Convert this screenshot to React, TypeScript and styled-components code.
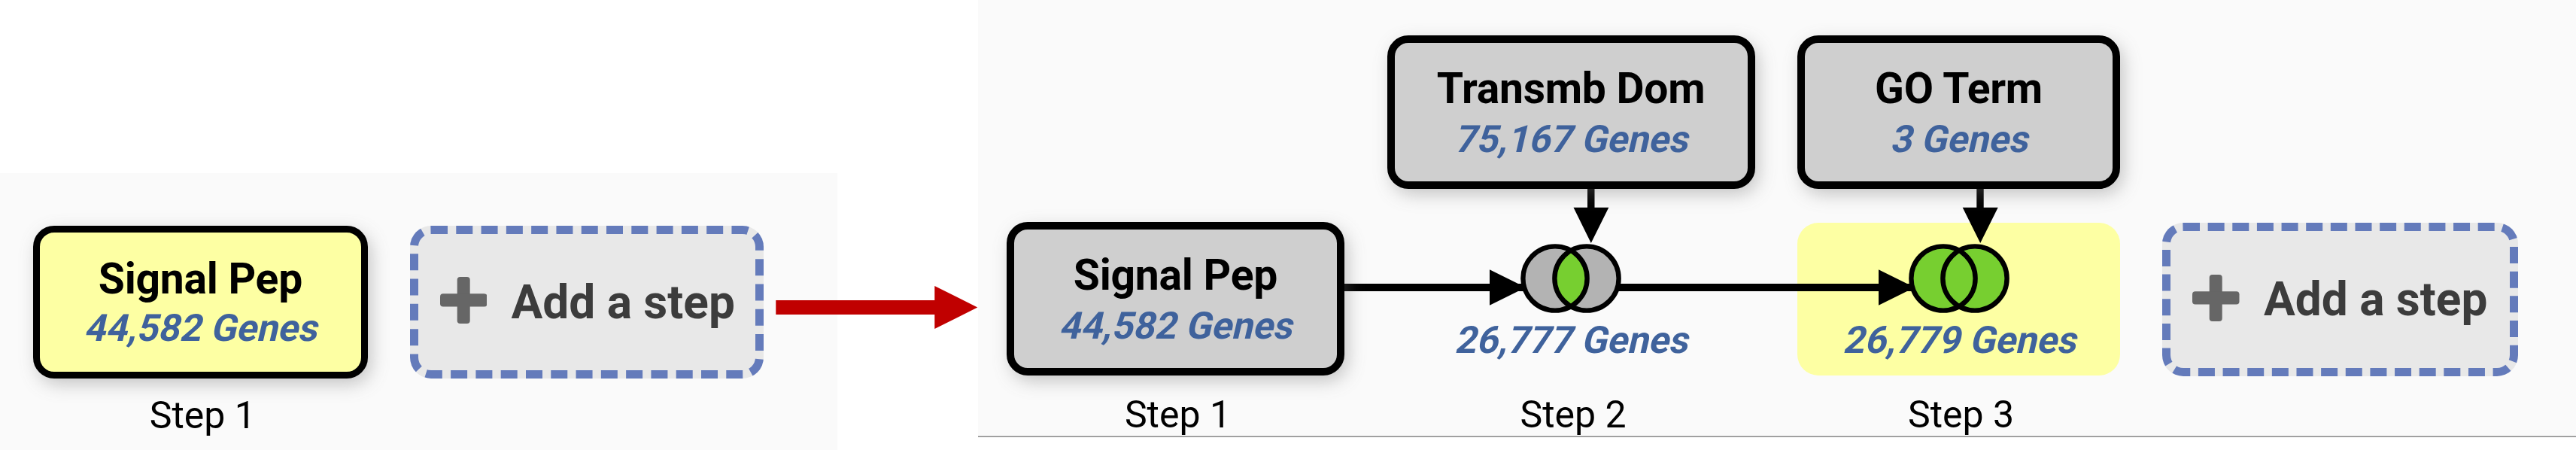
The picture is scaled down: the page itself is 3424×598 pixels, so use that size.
import React from 'react';
import styled, { createGlobalStyle } from 'styled-components';

const GlobalStyle = createGlobalStyle`
  body { margin: 0; background: #fff; font-family: Roboto, "Liberation Sans", sans-serif; color: #000; }
`;

const Page = styled.main`
  display: flex;
  align-items: flex-start;
  width: 3424px;
  height: 598px;
  overflow: hidden;
`;

const Before = styled.section`
  display: flex;
  flex: none;
  gap: 55.7px;
  box-sizing: border-box;
  width: 1113px;
  height: 368px;
  margin: 230px 187px 0 0;
  padding: 70px 0 0 43.6px;
  background: #fafafa;
`;

const After = styled.section`
  position: relative;
  display: flex;
  flex: none;
  gap: 56.5px;
  box-sizing: border-box;
  width: 2124px;
  height: 581px;
  padding: 47px 0 0 37.8px;
  overflow: hidden;
  background: linear-gradient(#bcbcbc, #bcbcbc) 0 579px / 100% 1px no-repeat,
    linear-gradient(#8a8a8a, #8a8a8a) 0 580px / 100% 1px no-repeat, #fafafa;
`;

const Column = styled.div<{ $width: number }>`
  display: flex;
  flex: none;
  flex-direction: column;
  width: ${(p) => p.$width}px;
`;

const Slot = styled.div`
  height: 204px;
  margin-bottom: 45px;
`;

const StepBox = styled.div<{ $active?: boolean; $tight?: boolean }>`
  position: relative;
  z-index: 2;
  display: flex;
  flex-direction: column;
  align-items: center;
  gap: ${(p) => (p.$tight ? 0.5 : 2.5)}px;
  box-sizing: border-box;
  height: ${(p) => (p.$tight ? 203 : 204)}px;
  padding-top: ${(p) => (p.$tight ? 30 : 29)}px;
  border: ${(p) => (p.$tight ? 9 : 10)}px solid #000;
  border-radius: 28px;
  background: ${(p) => (p.$active ? '#fdffa3' : '#cfcfcf')};
  box-shadow: 5px 8px 24px -2px rgba(110, 110, 110, 0.42);
`;

const Title = styled.div`
  font-size: 57px;
  font-weight: 700;
  line-height: 64px;
  letter-spacing: -0.25px;
  white-space: nowrap;
`;

const Count = styled.div`
  color: #3f629c;
  font-size: 50px;
  font-weight: 700;
  line-height: 64px;
  white-space: nowrap;
  transform: skewX(-13deg);
  transform-origin: 50% 49px;
`;

const Result = styled.div<{ $active?: boolean }>`
  display: flex;
  flex-direction: column;
  align-items: center;
  gap: 4.5px;
  box-sizing: border-box;
  height: 204px;
  padding-top: 27.5px;
  border-radius: 28px;
  background: ${(p) => (p.$active ? '#fdffa3' : 'transparent')};
`;

const VennIcon = styled.svg`
  position: relative;
  z-index: 2;
  flex: none;
  display: block;
`;

const Label = styled.div<{ $tight?: boolean }>`
  padding-left: 6px;
  margin-top: ${(p) => (p.$tight ? 19 : 22)}px;
  font-size: 50px;
  line-height: 60px;
  text-align: center;
`;

const AddButton = styled.button<{ $width: number; $height: number }>`
  display: flex;
  flex: none;
  align-items: center;
  gap: 32px;
  box-sizing: border-box;
  width: ${(p) => p.$width}px;
  height: ${(p) => p.$height}px;
  padding: 0 0 0 29px;
  border: 11px dashed #647bbb;
  border-radius: 28px;
  background: #e8e8e8;
  color: #3c3c3c;
  font: 700 62.2px/72px Roboto, "Liberation Sans", sans-serif;
  white-space: nowrap;
`;

const PlusIcon = styled.svg`
  flex: none;
  margin-bottom: 5px;
`;

const Transition = styled.svg`
  position: absolute;
  left: 1031px;
  top: 380px;
`;

const Connectors = styled.svg`
  position: absolute;
  left: 0;
  top: 0;
  z-index: 1;
`;

function Plus() {
  return (
    <PlusIcon width="62.5" height="62" viewBox="0 0 62.5 62" fill="#666">
      <rect x="22.7" y="0" width="17" height="62" rx="4" />
      <rect x="0" y="22.2" width="62.5" height="17.4" rx="4" />
    </PlusIcon>
  );
}

function Venn({ union }: { union?: boolean }) {
  const side = union ? '#77cf30' : '#b3b3b3';
  return (
    <VennIcon width="134" height="92" viewBox="0 0 134 92">
      <circle cx="46" cy="46" r="42.6" fill={side} />
      <circle cx="88" cy="46" r="42.6" fill={side} />
      <path d="M67 8.9A42.6 42.6 0 0 1 67 83.1A42.6 42.6 0 0 1 67 8.9Z" fill="#77cf30" />
      <g fill="none" stroke="#000" strokeWidth="6.4">
        <circle cx="46" cy="46" r="42.6" />
        <circle cx="88" cy="46" r="42.6" />
      </g>
    </VennIcon>
  );
}

interface StepProps {
  title: string;
  count: string;
  active?: boolean;
  tight?: boolean;
}

function Step({ title, count, active, tight }: StepProps) {
  return (
    <StepBox $active={active} $tight={tight}>
      <Title>{title}</Title>
      <Count>{count}</Count>
    </StepBox>
  );
}

export default function App() {
  return (
    <>
      <GlobalStyle />
      <Page>
        <Before>
          <Column $width={445.6}>
            <Step title="Signal Pep" count="44,582 Genes" active tight />
            <Label $tight>Step 1</Label>
          </Column>
          <AddButton $width={470} $height={203}>
            <Plus />
            Add a step
          </AddButton>
        </Before>
        <After>
          <Connectors width="2124" height="579">
            <path d="M487 377H725V387H487ZM680 358.3L728 382L680 405.7Z" />
            <path d="M850 377H1242V387H850ZM1197 358.3L1245 382L1197 405.7Z" />
            <path d="M810 250H819.5V277H810ZM791.5 275.7H838.3L814.8 323Z" />
            <path d="M1327.3 250H1336.7V277H1327.3ZM1308.7 275.7H1355.7L1332.2 323Z" />
          </Connectors>
          <Column $width={449.3}>
            <Slot />
            <Step title="Signal Pep" count="44,582 Genes" />
            <Label>Step 1</Label>
          </Column>
          <Column $width={489.1}>
            <Slot>
              <Step title="Transmb Dom" count="75,167 Genes" />
            </Slot>
            <Result>
              <Venn />
              <Count>26,777 Genes</Count>
            </Result>
            <Label>Step 2</Label>
          </Column>
          <Column $width={428.7}>
            <Slot>
              <Step title="GO Term" count="3 Genes" />
            </Slot>
            <Result $active>
              <Venn union />
              <Count>26,779 Genes</Count>
            </Result>
            <Label>Step 3</Label>
          </Column>
          <Column $width={472.4}>
            <Slot />
            <AddButton $width={472.4} $height={204}>
              <Plus />
              Add a step
            </AddButton>
          </Column>
        </After>
      </Page>
      <Transition width="269" height="57">
        <path d="M0 19H211V0L268 28.5L211 57V38H0Z" fill="#c00000" transform="translate(.3 0)" />
      </Transition>
    </>
  );
}
